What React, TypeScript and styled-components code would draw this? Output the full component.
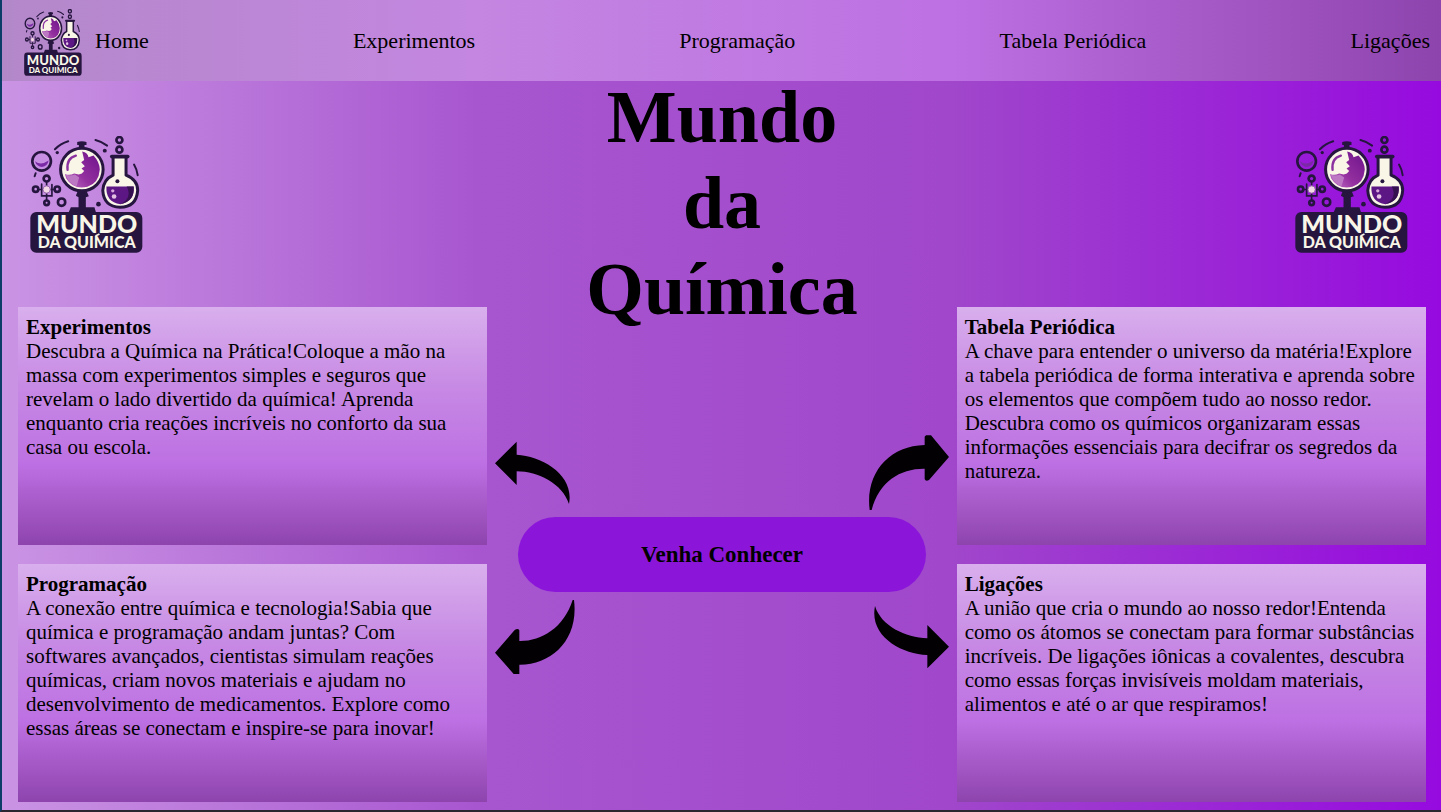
import React from "react";
import styled, { createGlobalStyle } from "styled-components";

const GlobalStyle = createGlobalStyle`
  * { box-sizing: border-box; }
  body {
    margin: 0;
    color: #000;
    font-family: "Liberation Serif", "Times New Roman", serif;
  }
`;

const Page = styled.div`
  display: flex;
  flex-direction: column;
  min-height: 100vh;
  border-left: 2px solid #0c3c68;
  border-bottom: 2px solid #2a272e;
  background: linear-gradient(to right, #ca94e4 0%, #a856d0 33%, #a047cb 66%, #960adf 100%);
`;

const Header = styled.header`
  display: flex;
  align-items: center;
  gap: 13px;
  height: 81px;
  padding: 4px 11px 0 22px;
  background: linear-gradient(to right, #b388c9 0%, #c486e1 33%, #bd70e3 66%, #8e44ad 100%);
`;

const Nav = styled.nav`
  flex: 1;
`;

const NavList = styled.ul`
  display: flex;
  justify-content: space-between;
  margin: 0 0 4px;
  padding: 0;
  list-style: none;
`;

const NavLink = styled.a`
  color: #000;
  font-size: 22px;
  line-height: 26px;
  text-decoration: none;
`;

const Main = styled.main`
  display: grid;
  grid-template-columns: repeat(3, minmax(0, 1fr));
  flex: 1;
  padding: 0 15px 8px 16px;
`;

const Column = styled.div`
  display: flex;
  flex-direction: column;
  gap: 19px;
`;

const LogoArea = styled.div<{ $end?: boolean }>`
  display: flex;
  justify-content: ${(p) => (p.$end ? "flex-end" : "flex-start")};
  height: 207px;
  padding: 55px ${(p) => (p.$end ? "18px" : "12px")} 0;
`;

const Card = styled.article`
  min-height: 238px;
  padding: 8px;
  background: linear-gradient(to bottom, #d9afed 0%, #c78ae4 33%, #bd70e3 66%, #8e44ad 100%);
  font-size: 21px;
  line-height: 24px;
`;

const CardTitle = styled.h2`
  margin: 0;
  font-size: 21px;
  line-height: 24px;
`;

const CardText = styled.p`
  margin: 0;
`;

const Center = styled.div`
  display: flex;
  flex-direction: column;
  align-items: center;
`;

const Title = styled.h1`
  margin: -7px 0 103px;
  font-size: 74px;
  line-height: 86px;
  text-align: center;
`;

const TitleLine = styled.span`
  display: block;
`;

const ArrowRow = styled.div`
  display: flex;
  justify-content: space-between;
  width: 100%;
  padding: 0 8px;
`;

const ArrowIcon = styled.svg`
  display: block;
  height: 75px;
  fill: #020003;
`;

const ExploreButton = styled.button`
  width: 87%;
  height: 75px;
  margin: 7px 0 8px;
  border: 0;
  border-radius: 38px;
  background: #8b16da;
  color: #000;
  font-family: inherit;
  font-size: 23px;
  font-weight: bold;
  cursor: pointer;
`;

const LogoSvg = styled.svg`
  display: block;
  flex: none;
`;

const LogoText = styled.text`
  fill: #f9f6e8;
  font-family: Lato, sans-serif;
  font-weight: 900;
  text-anchor: middle;
`;

const INK = "#26163f";
const CREAM = "#f9f6e8";

function Logo({ width, height }: { width: number; height: number }) {
  const id = React.useId();
  return (
    <LogoSvg width={width} height={height} viewBox={`0 0 ${width} ${height}`} role="img" aria-label="Mundo da Química">
      <defs>
        <linearGradient id={id} x1="0" y1="1" x2="1" y2="0">
          <stop offset="0" stopColor="#c373c9" />
          <stop offset="0.4" stopColor="#94309f" />
          <stop offset="1" stopColor="#6e138c" />
        </linearGradient>
      </defs>
      <svg width={width} height={height} viewBox="30 32 340 352" preserveAspectRatio="none">
        <g fill="none" stroke={INK} strokeWidth="8" strokeLinecap="round">
          <circle cx="65" cy="108" r="28" />
          <path d="M105 72Q122 55 145 48M227 44Q247 49 262 61M343 118Q352 133 354 150M47 144L44 153" strokeWidth="6" />
          <circle cx="299" cy="44" r="9" />
          <circle cx="299" cy="73" r="9" />
          <circle cx="125" cy="231" r="11" />
          <circle cx="80" cy="160" r="9" />
          <circle cx="47" cy="192" r="8" />
          <circle cx="112" cy="192" r="8" />
          <circle cx="80" cy="233" r="7" />
          <path d="M80 171V224M58 193H102M65 177V212H96V178" strokeWidth="5" />
        </g>
        <circle cx="80" cy="193" r="11" fill="#f4d9e6" stroke="#9b68b0" strokeWidth="3" />
        <path d="M45 108Q63 122 86 106Q83 123 66 125Q50 124 45 108Z" fill="#7b2aa6" />
        <circle cx="112" cy="82" r="5" fill={INK} />
        <circle cx="255" cy="76" r="6" fill={INK} />
        <circle cx="236" cy="237" r="7" fill={INK} />

        <path d="M172 50Q186 45 200 50V59H194V70H177V59H172ZM174 197H200L207 213L198 216V246H224L230 267H144L153 246H176V216L168 212Z" fill={INK} />
        <circle cx="186" cy="133" r="64" fill={CREAM} stroke={INK} strokeWidth="9" />
        <path d="M187 79Q204 83 206 96L221 91Q239 110 240 133Q237 174 203 185Q160 195 139 160L135 146Q148 152 163 145Q178 150 186 145L193 137L185 130L195 123L184 111L193 104Z" fill={`url(#${id})`} />
        <path d="M137 148Q151 154 165 148L178 157L170 183Q147 176 137 148Z" fill="#bd78c4" />
        <path d="M143 134Q139 99 168 91" fill="none" stroke="#8b32a0" strokeWidth="7" strokeLinecap="round" />

        <path d="M280 94H319V150Q354 164 354 196Q350 246 301 246Q252 245 249 196Q251 163 280 150Z" fill={CREAM} stroke={INK} strokeWidth="9" strokeLinejoin="round" />
        <path d="M276 94H324" stroke={INK} strokeWidth="11" strokeLinecap="round" />
        <path d="M260 184H342Q346 229 302 237Q257 231 260 184Z" fill="#5c1784" />
        <path d="M321 184H342Q346 229 302 237Q339 218 321 184Z" fill="#35124f" />
        <circle cx="293" cy="168" r="6" fill={INK} />
        <circle cx="279" cy="197" r="5" fill="#d7a7dc" />
        <circle cx="283" cy="214" r="7" fill="#e4c1e3" />

        <rect x="31" y="261" width="337" height="122" rx="18" fill={INK} />
        <path d="M227 333L239 327" stroke={CREAM} strokeWidth="5" />
      </svg>
      <LogoText>
        <tspan x={width * 0.502} y={height * 0.832} fontSize={Math.round(width * 0.218)}>
          MUNDO
        </tspan>
        <tspan x={width * 0.502} y={height * 0.957} fontSize={Math.round(width * 0.142)}>
          DA QUIMICA
        </tspan>
      </LogoText>
    </LogoSvg>
  );
}

const links = ["Home", "Experimentos", "Programação", "Tabela Periódica", "Ligações"];

function Topic({ title, children }: { title: string; children: React.ReactNode }) {
  return (
    <Card>
      <CardTitle>{title}</CardTitle>
      <CardText>{children}</CardText>
    </Card>
  );
}

export default function App() {
  return (
    <>
      <GlobalStyle />
      <Page>
        <Header>
          <Logo width={58} height={67} />
          <Nav>
            <NavList>
              {links.map((label) => (
                <li key={label}>
                  <NavLink href="#">{label}</NavLink>
                </li>
              ))}
            </NavList>
          </Nav>
        </Header>
        <Main>
          <Column>
            <LogoArea>
              <Logo width={113} height={117} />
            </LogoArea>
            <Topic title="Experimentos">
              Descubra a Química na Prática!Coloque a mão na massa com experimentos simples e seguros que
              revelam o lado divertido da química! Aprenda enquanto cria reações incríveis no conforto da
              sua casa ou escola.
            </Topic>
            <Topic title="Programação">
              A conexão entre química e tecnologia!Sabia que química e programação andam juntas? Com
              softwares avançados, cientistas simulam reações químicas, criam novos materiais e ajudam no
              desenvolvimento de medicamentos. Explore como essas áreas se conectam e inspire-se para
              inovar!
            </Topic>
          </Column>
          <Center>
            <Title>
              <TitleLine>Mundo</TitleLine>
              <TitleLine>da</TitleLine>
              <TitleLine>Química</TitleLine>
            </Title>
            <ArrowRow>
              <ArrowIcon width="75" viewBox="47 30 225 225" aria-hidden="true">
                <path d="M47 115L112 50V89C190 94 286 150 269 237C249 176 177 139 112 139V180Z" />
              </ArrowIcon>
              <ArrowIcon width="80" viewBox="55 30 240 225" aria-hidden="true">
                <path d="M57 255C43 145 115 62 222 60V35L226 31H241L295 96L235 165Q225 171 222 162V131C150 130 85 169 63 255Z" />
              </ArrowIcon>
            </ArrowRow>
            <ExploreButton type="button">Venha Conhecer</ExploreButton>
            <ArrowRow>
              <ArrowIcon width="80" viewBox="47 30 240 225" aria-hidden="true">
                <path d="M280 30H284C299 148 218 225 120 224V252H103L47 188L106 120Q116 113 120 121V153C186 154 253 114 280 30Z" />
              </ArrowIcon>
              <ArrowIcon width="75" viewBox="70 30 225 225" aria-hidden="true">
                <path d="M73 48C91 108 165 143 230 145V105L295 170L230 235V195C151 192 55 138 73 48Z" />
              </ArrowIcon>
            </ArrowRow>
          </Center>
          <Column>
            <LogoArea $end>
              <Logo width={113} height={117} />
            </LogoArea>
            <Topic title="Tabela Periódica">
              A chave para entender o universo da matéria!Explore a tabela periódica de forma interativa e
              aprenda sobre os elementos que compõem tudo ao nosso redor. Descubra como os químicos
              organizaram essas informações essenciais para decifrar os segredos da natureza.
            </Topic>
            <Topic title="Ligações">
              A união que cria o mundo ao nosso redor!Entenda como os átomos se conectam para formar
              substâncias incríveis. De ligações iônicas a covalentes, descubra como essas forças
              invisíveis moldam materiais, alimentos e até o ar que respiramos!
            </Topic>
          </Column>
        </Main>
      </Page>
    </>
  );
}
